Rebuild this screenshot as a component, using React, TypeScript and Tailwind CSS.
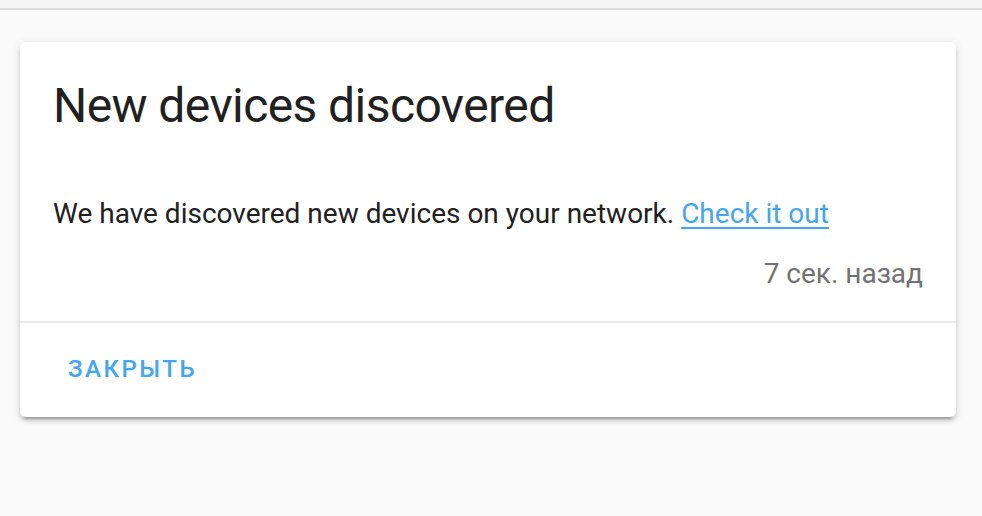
const App = () => {
  return (
    <div className="min-h-[516px] w-full bg-[#fafafa] font-['Roboto','Liberation_Sans',sans-serif]">
      <div className="h-[8px] bg-[#f5f5f5]" />
      <div className="h-[2px] bg-[#dcdcdc]" />
      <div className="pl-[20px] pt-[32px]">
        <div className="flex w-[936px] flex-col rounded-[6px] bg-white shadow-[0_4px_4px_0_rgba(0,0,0,0.14),0_2px_10px_0_rgba(0,0,0,0.12),0_6px_2px_-4px_rgba(0,0,0,0.2)]">
          <div className="px-[33px] pt-[32px] text-[48px] leading-[64px] font-normal tracking-[-0.58px] text-[#212121]">
            New devices discovered
          </div>
          <div className="px-[33px] pt-[56px] pb-[27px]">
            <p className="text-[28px] leading-[40px] text-[#212121]">
              We have discovered new devices on your network.{" "}
              <a
                href="#"
                className="text-[#42a5f5] underline decoration-2 underline-offset-[4px]"
              >
                Check it out
              </a>
            </p>
            <p className="mt-[20px] text-right text-[28px] leading-[40px] text-[#727272]">
              7 сек. назад
            </p>
          </div>
          <div className="border-t-2 border-[#e8e8e8] px-[48px] pt-[34px] pb-[33px]">
            <button
              type="button"
              className="text-[24px] leading-[24px] font-medium tracking-[2.5px] text-[#42a5f5] uppercase"
            >
              Закрыть
            </button>
          </div>
        </div>
      </div>
    </div>
  );
};

export default App;
